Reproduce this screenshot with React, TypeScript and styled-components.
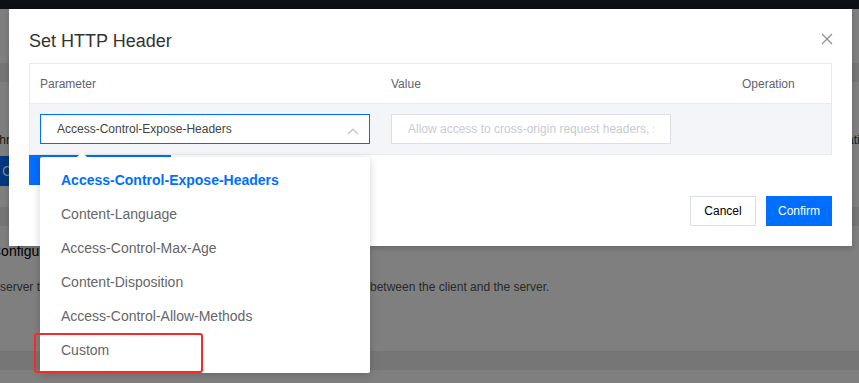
import React from 'react';
import styled, { createGlobalStyle } from 'styled-components';

const GlobalStyle = createGlobalStyle`
  html, body {
    margin: 0;
    padding: 0;
    background: #ffffff;
  }
  body {
    font-family: "Liberation Sans", Arial, sans-serif;
  }
  * {
    box-sizing: border-box;
  }
`;

const options = [
  'Access-Control-Expose-Headers',
  'Content-Language',
  'Access-Control-Max-Age',
  'Content-Disposition',
  'Access-Control-Allow-Methods',
  'Custom',
];

const App = () => {
  const selected = options[0];

  return (
    <Screen>
      <GlobalStyle />
      <Page>
        <TopBar />
        <Card height={54} />
        <Card height={125} topGap>
          <CardLine>
            <LeftCut>through</LeftCut>
            <RightCut>Operation</RightCut>
          </CardLine>
          <PageButton>Create</PageButton>
        </Card>
        <Card height={125} topGap>
          <CardTitle>Configuration</CardTitle>
          <CardText>
            <HiddenPart>the server to pass additional information with a request or response </HiddenPart>
            <span>between the client and the server.</span>
          </CardText>
        </Card>
        <Card height={20} topGap />
      </Page>

      <Overlay />

      <Modal>
        <ModalHeader>
          <ModalTitle>Set HTTP Header</ModalTitle>
          <CloseButton aria-label="close">
            <svg width="12" height="12" viewBox="0 0 12 12">
              <path d="M1 1 L11 11 M11 1 L1 11" stroke="#8c8c8c" strokeWidth="1.1" fill="none" />
            </svg>
          </CloseButton>
        </ModalHeader>

        <Table>
          <HeadRow>
            <Cell width={351}>Parameter</Cell>
            <Cell width={351}>Value</Cell>
            <Cell width={99}>Operation</Cell>
          </HeadRow>
          <BodyRow>
            <Cell width={351}>
              <SelectWrap>
                <Select>
                  <span>{selected}</span>
                  <svg width="12" height="7" viewBox="0 0 12 7">
                    <path d="M1 6 L6 1.3 L11 6" stroke="#c4c8d0" strokeWidth="1.5" fill="none" />
                  </svg>
                </Select>
                <Dropdown>
                  <Arrow />
                  {options.map((item) => (
                    <Option key={item} active={item === selected}>
                      {item}
                    </Option>
                  ))}
                </Dropdown>
                <Highlight />
              </SelectWrap>
            </Cell>
            <Cell width={351}>
              <ValueInput placeholder="Allow access to cross-origin request headers, separated by commas" />
            </Cell>
            <Cell width={99} />
          </BodyRow>
        </Table>

        <AddButton>Add</AddButton>

        <Footer>
          <Button>Cancel</Button>
          <Button primary>Confirm</Button>
        </Footer>
      </Modal>
    </Screen>
  );
};

const Screen = styled.div`
  position: relative;
  width: 859px;
  height: 383px;
  overflow: hidden;
`;

const Page = styled.div`
  display: flex;
  flex-direction: column;
  background: #ececec;
  height: 100%;
`;

const TopBar = styled.div`
  height: 9px;
  flex-shrink: 0;
  background: #18202b;
`;

const Card = styled.div<{ height: number; topGap?: boolean }>`
  height: ${({ height }) => height}px;
  flex-shrink: 0;
  margin-top: ${({ topGap }) => (topGap ? '19px' : '0')};
  background: #ffffff;
  padding: 20px 0 0 0;
  overflow: hidden;
`;

const CardLine = styled.div`
  display: flex;
  justify-content: space-between;
  margin-top: 29px;
  font-size: 12px;
  color: #333;
  line-height: 18px;
  white-space: nowrap;
`;

const LeftCut = styled.span`
  margin-left: -4px;
`;

const RightCut = styled.span`
  margin-right: -14px;
`;

const PageButton = styled.button`
  display: block;
  margin: 7px 0 0 -61px;
  height: 30px;
  width: 70px;
  border: none;
  background: #006eff;
  color: #fff;
  font-family: inherit;
  font-size: 14px;
  text-align: left;
  padding: 0 0 0 63px;
  overflow: hidden;
  white-space: nowrap;
`;

const CardTitle = styled.div`
  margin: 0 0 0 -9px;
  font-size: 14px;
  color: #000;
  line-height: 10px;
  white-space: nowrap;
`;

const CardText = styled.div`
  display: flex;
  margin: 22px 0 0 -20px;
  font-size: 12px;
  color: #555;
  line-height: 18px;
  white-space: nowrap;
`;

const HiddenPart = styled.span`
  width: 390px;
  flex-shrink: 0;
  overflow: hidden;
`;

const Overlay = styled.div`
  position: absolute;
  inset: 0;
  background: rgba(0, 0, 0, 0.5);
`;

const Modal = styled.div`
  position: absolute;
  left: 9px;
  top: 9px;
  width: 843px;
  height: 237px;
  background: #ffffff;
  padding: 20px;
  box-shadow: 0 2px 6px rgba(0, 0, 0, 0.2);
  display: flex;
  flex-direction: column;
`;

const ModalHeader = styled.div`
  display: flex;
  justify-content: space-between;
  align-items: flex-start;
  margin-bottom: 10px;
`;

const ModalTitle = styled.h3`
  margin: 0;
  font-size: 18px;
  font-weight: 400;
  line-height: 24px;
  color: #333;
`;

const CloseButton = styled.button`
  border: none;
  background: none;
  padding: 0;
  margin: 3px -2px 0 0;
  width: 14px;
  height: 14px;
  display: flex;
  align-items: center;
  justify-content: center;
`;

const Table = styled.div`
  border: 1px solid #e7eaef;
  display: flex;
  flex-direction: column;
`;

const HeadRow = styled.div`
  display: flex;
  height: 40px;
  align-items: center;
  border-bottom: 1px solid #e7eaef;
  font-size: 12px;
  color: #5f6470;
`;

const BodyRow = styled.div`
  display: flex;
  height: 50px;
  align-items: center;
  background: #f4f5f9;
`;

const Cell = styled.div<{ width: number }>`
  width: ${({ width }) => width}px;
  padding: 0 10px;
  flex-shrink: 0;
`;

const SelectWrap = styled.div`
  position: relative;
  width: 330px;
`;

const Select = styled.div`
  height: 30px;
  border: 1px solid #006eff;
  background: #ffffff;
  display: flex;
  align-items: center;
  justify-content: space-between;
  padding: 0 10px 0 16px;
  font-size: 12px;
  color: #444;
  svg {
    margin-top: 4px;
  }
`;

const Dropdown = styled.div`
  position: absolute;
  left: 0;
  top: 43px;
  width: 330px;
  background: #ffffff;
  border-radius: 2px;
  box-shadow: 0 2px 8px rgba(0, 0, 0, 0.18);
  padding: 6px 0;
  z-index: 2;
`;

const Arrow = styled.div`
  position: absolute;
  left: 37px;
  top: -5px;
  width: 0;
  height: 0;
  border-left: 5px solid transparent;
  border-right: 5px solid transparent;
  border-bottom: 5px solid #ffffff;
`;

const Option = styled.div<{ active?: boolean }>`
  height: 34px;
  line-height: 34px;
  padding: 0 21px;
  font-size: 14px;
  font-weight: ${({ active }) => (active ? 700 : 400)};
  color: ${({ active }) => (active ? '#006eff' : '#666')};
  white-space: nowrap;
`;

const Highlight = styled.div`
  position: absolute;
  left: -6px;
  top: 219px;
  width: 169px;
  height: 40px;
  border: 2px solid #f52a2a;
  border-radius: 3px;
  z-index: 3;
`;

const ValueInput = styled.input`
  width: 280px;
  height: 30px;
  border: 1px solid #dcdfe5;
  background: #ffffff;
  padding: 0 16px;
  font-family: inherit;
  font-size: 12px;
  outline: none;
  &::placeholder {
    color: #c8cbd1;
  }
`;

const AddButton = styled.button`
  align-self: flex-start;
  width: 142px;
  height: 30px;
  border: none;
  background: #006eff;
  color: #ffffff;
  font-family: inherit;
  font-size: 12px;
`;

const Footer = styled.div`
  display: flex;
  justify-content: flex-end;
  gap: 10px;
  margin-top: 11px;
`;

const Button = styled.button<{ primary?: boolean }>`
  width: 66px;
  height: 30px;
  font-family: inherit;
  font-size: 12px;
  border: 1px solid ${({ primary }) => (primary ? '#006eff' : '#dcdfe5')};
  background: ${({ primary }) => (primary ? '#006eff' : '#ffffff')};
  color: ${({ primary }) => (primary ? '#ffffff' : '#000000')};
  padding: 0;
`;

export default App;
